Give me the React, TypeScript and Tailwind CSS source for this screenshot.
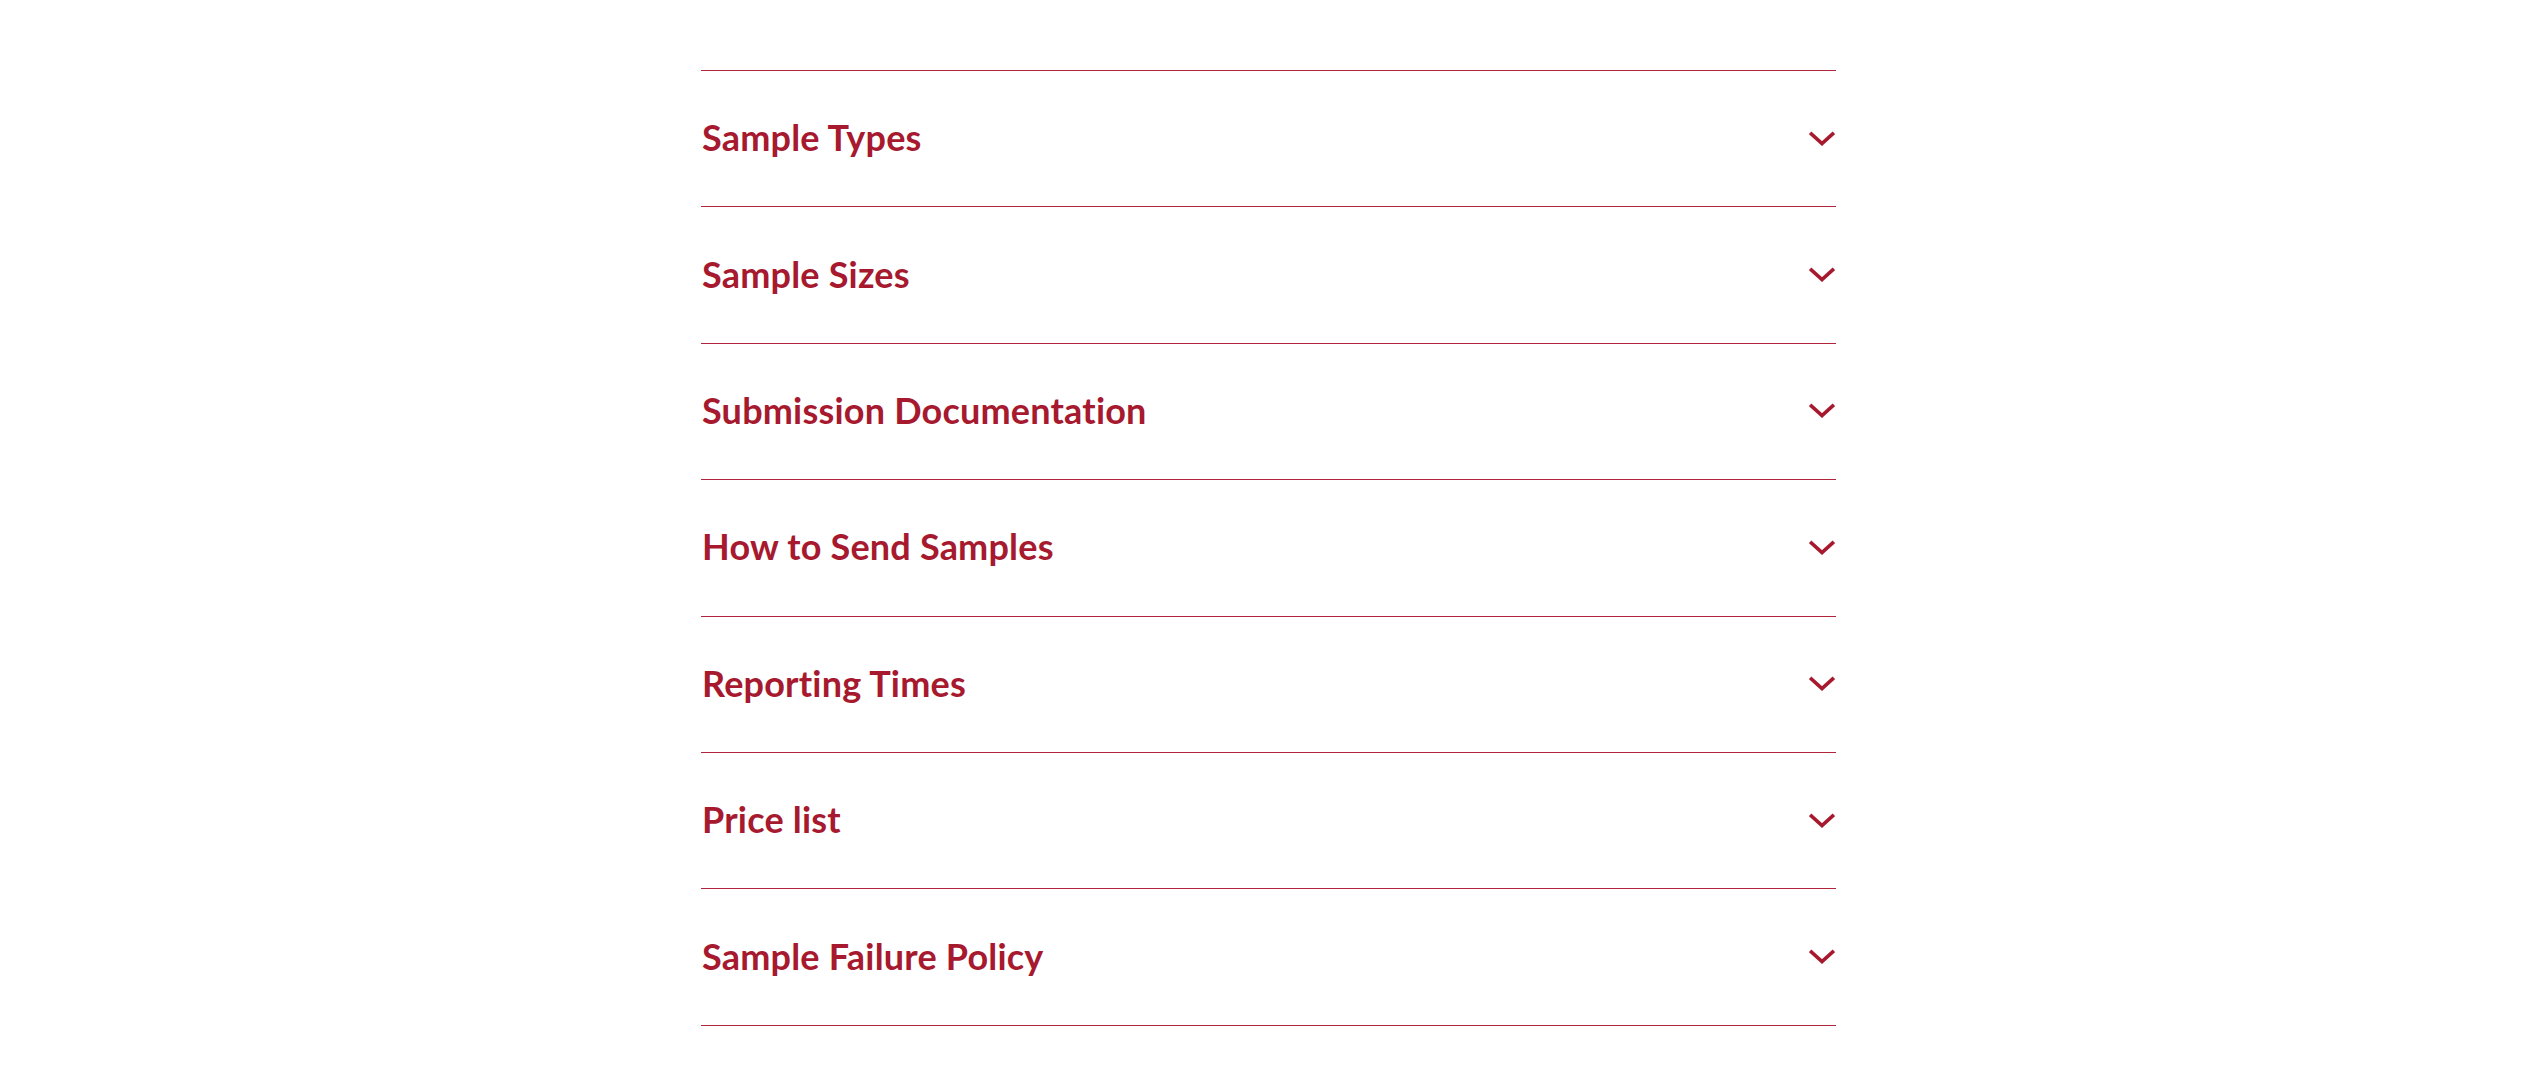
const items = [
  "Sample Types",
  "Sample Sizes",
  "Submission Documentation",
  "How to Send Samples",
  "Reporting Times",
  "Price list",
  "Sample Failure Policy",
];

function Chevron() {
  return (
    <svg width="26" height="16" viewBox="0 0 26 16" fill="none" className="shrink-0">
      <path d="M2.5 3 L13 12.5 L23.5 3" stroke="#a6192e" strokeWidth="3.6" strokeLinecap="square" strokeLinejoin="miter" />
    </svg>
  );
}

export default function App() {
  return (
    <div className="min-h-screen bg-white font-['Lato','Noto_Sans',sans-serif]">
      <div className="w-[1135px] ml-[701px] pt-[70px]">
        <div className="border-t border-[#b0253c]">
          {items.map((label) => (
            <button
              key={label}
              className="flex w-full h-[136.4px] items-center justify-between border-b border-[#b0253c] pl-[1px] pr-[1px] text-left"
            >
              <span className="pb-[3px] text-[36px] font-bold leading-none text-[#a6192e] tracking-[0.2px]">{label}</span>
              <Chevron />
            </button>
          ))}
        </div>
      </div>
    </div>
  );
}
